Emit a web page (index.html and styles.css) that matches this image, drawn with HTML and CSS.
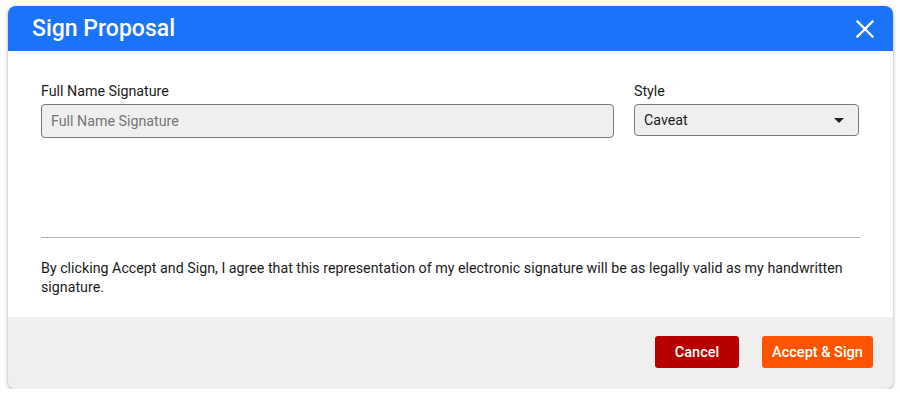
FILE: index.html
```html
<!DOCTYPE html>
<html lang="en">
<head>
	<meta charset="UTF-8">
	<title>Sign Proposal</title>
	<link rel="stylesheet" href="styles.css">
</head>
<body>
	<div class="dialog">
		<div class="dialogHead">
			<h1 class="dialogTitle">Sign Proposal</h1>
			<button class="closeBtn" type="button" aria-label="Close">
				<svg width="20" height="20" viewBox="0 0 20 20">
					<path d="M2.5 2.5 L17.5 17.5 M17.5 2.5 L2.5 17.5" stroke="#fff" stroke-width="2.4" stroke-linecap="square" fill="none"/>
				</svg>
			</button>
		</div>
		<div class="dialogBody">
			<div class="fieldRow">
				<div class="field fieldName">
					<label class="fieldLabel" for="fullName">Full Name Signature</label>
					<input id="fullName" class="textInput" type="text" placeholder="Full Name Signature">
				</div>
				<div class="field fieldStyle">
					<label class="fieldLabel">Style</label>
					<div class="selectBox">
						<span>Caveat</span>
						<span class="caret"></span>
					</div>
				</div>
			</div>
			<hr class="divider">
			<p class="legal">By clicking Accept and Sign, I agree that this representation of my electronic signature will be as legally valid as my handwritten signature.</p>
		</div>
		<div class="dialogFoot">
			<button class="btn btnCancel" type="button">Cancel</button>
			<button class="btn btnAccept" type="button">Accept &amp; Sign</button>
		</div>
	</div>
</body>
</html>
```

FILE: styles.css
```css
* {
	padding: 0;
	margin: 0;
	box-sizing: border-box;
}
body {
	background: #fff;
	font-family: Roboto, "Liberation Sans", sans-serif;
	color: #212121;
}
/* dialog frame */
.dialog {
	width: 885px;
	margin: 6px 0 0 8px;
	border-radius: 8px;
	overflow: hidden;
	background: #fff;
	box-shadow: 0 2px 4px rgba(0, 0, 0, 0.28), 0 0 2px rgba(0, 0, 0, 0.12);
}
.dialogHead {
	display: flex;
	align-items: center;
	justify-content: space-between;
	height: 45px;
	padding: 0 18px 0 24px;
	background: #1a73f8;
}
.dialogTitle {
	color: #fff;
	font-size: 23px;
	font-weight: 500;
	line-height: 1;
}
.closeBtn {
	display: flex;
	background: none;
	border: none;
	padding: 0;
	cursor: pointer;
}
/* body */
.dialogBody {
	display: flex;
	flex-direction: column;
	height: 266px;
	padding: 31px 33px 20px 33px;
}
.fieldRow {
	display: flex;
	gap: 20px;
}
.fieldName {
	width: 573px;
}
.fieldStyle {
	width: 225px;
}
.fieldLabel {
	display: block;
	font-size: 14.25px;
	line-height: 18px;
	margin-bottom: 4px;
	color: #1c1c1c;
}
.textInput {
	display: block;
	width: 100%;
	height: 34px;
	padding: 0 9px;
	border: 1px solid #7a7a7a;
	border-radius: 4px;
	background: #efefef;
	font-family: inherit;
	font-size: 14.25px;
	color: #333;
}
.textInput::placeholder {
	color: #767676;
}
.selectBox {
	display: flex;
	align-items: center;
	justify-content: space-between;
	height: 32px;
	padding: 0 14px 0 9px;
	border: 1px solid #7a7a7a;
	border-radius: 4px;
	background: #efefef;
	font-size: 14.25px;
	color: #1c1c1c;
}
.caret {
	width: 0;
	height: 0;
	border-left: 5px solid transparent;
	border-right: 5px solid transparent;
	border-top: 5px solid #222;
}
.divider {
	margin-top: auto;
	width: 819px;
	border: none;
	border-top: 1px solid #b4b4b4;
}
.legal {
	margin-top: 21px;
	font-size: 14.25px;
	line-height: 19px;
	color: #1c1c1c;
}
/* footer */
.dialogFoot {
	display: flex;
	justify-content: flex-end;
	gap: 23px;
	height: 72px;
	padding: 19px 20px 0 0;
	background: #efefef;
}
.btn {
	height: 32px;
	border: none;
	border-radius: 3px;
	color: #fff;
	font-family: inherit;
	font-size: 14.5px;
	font-weight: 500;
	cursor: pointer;
}
.btnCancel {
	width: 84px;
	background: #b90000;
}
.btnAccept {
	width: 111px;
	background: #ff5500;
}
```
